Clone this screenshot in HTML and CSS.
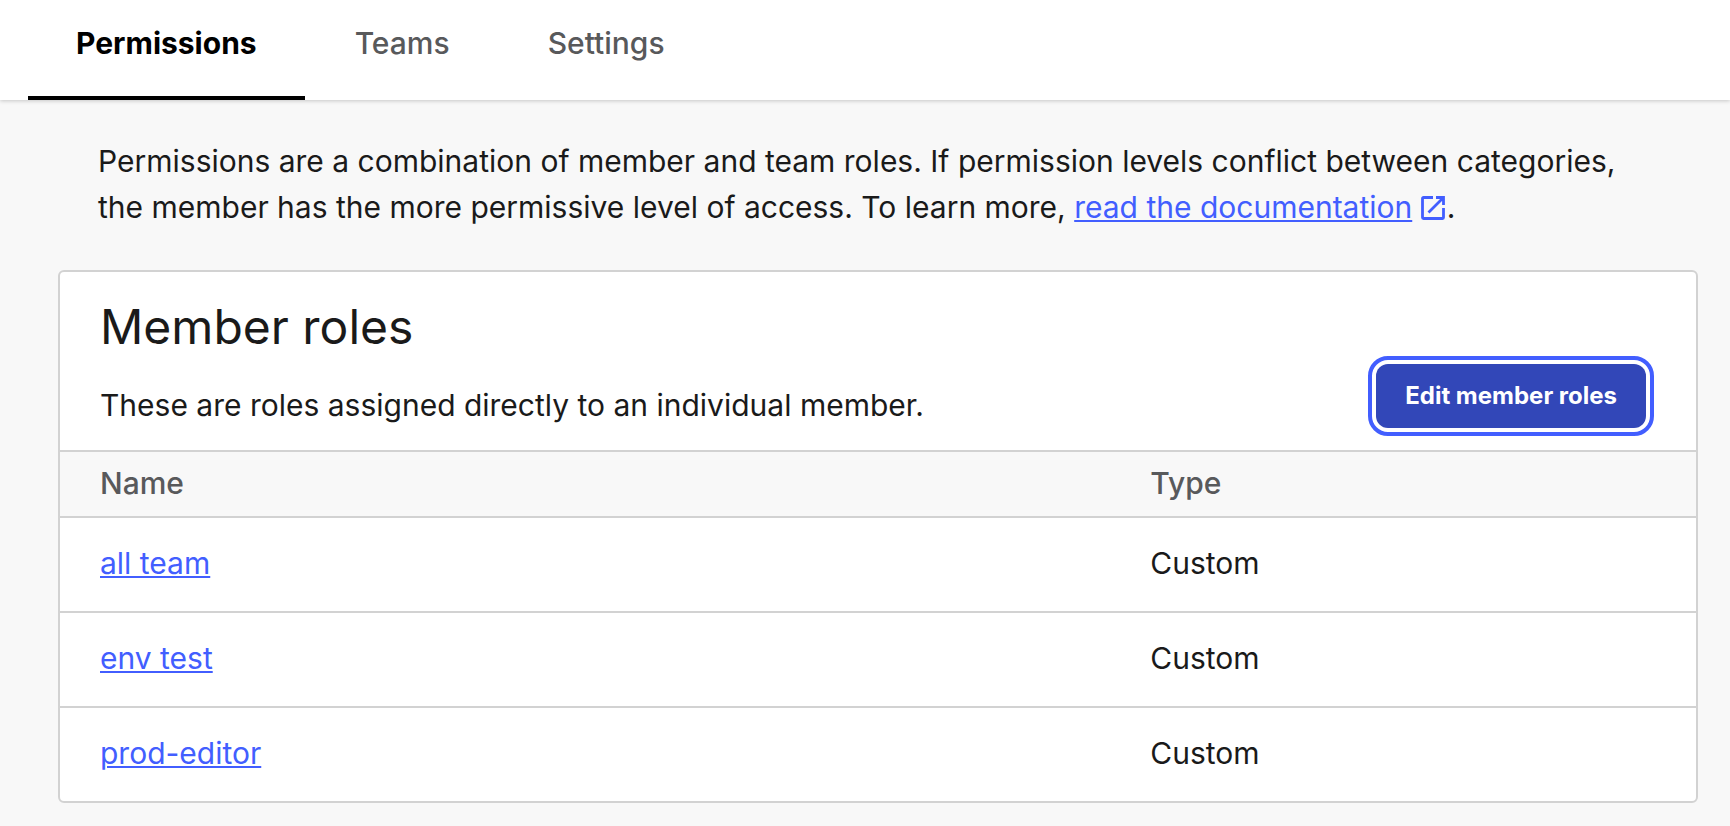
FILE: index.html
```html
<!DOCTYPE html>
<html lang="en">
<head>
<meta charset="utf-8">
<meta name="viewport" content="width=device-width, initial-scale=1">
<title>Permissions</title>
<link rel="stylesheet" href="styles.css">
</head>
<body>
<nav class="tabs" aria-label="Member sections">
  <a class="tab tab-active" href="#permissions" aria-current="page">Permissions</a>
  <a class="tab" href="#teams">Teams</a>
  <a class="tab" href="#settings">Settings</a>
</nav>
<main class="content">
  <p class="intro">Permissions are a combination of member and team roles. If permission levels conflict between categories, the member has the more permissive level of access. To learn more, <a class="link" href="#docs">read the documentation</a> <svg class="external" viewBox="0 0 24 24" aria-hidden="true"><path d="M12 1.500H2.500a1 1 0 0 0-1 1v19a1 1 0 0 0 1 1h19a1 1 0 0 0 1-1V12M15 1.500h7.500V9M22 2L7.500 16.500" fill="none" stroke="currentColor" stroke-width="2.800"/></svg>.</p>
  <section class="card" aria-labelledby="roles-title">
    <header class="card-header">
      <div class="card-text">
        <h2 class="card-title" id="roles-title">Member roles</h2>
        <p class="card-description">These are roles assigned directly to an individual member.</p>
      </div>
      <button class="button" type="button">Edit member roles</button>
    </header>
    <table class="roles">
      <thead>
        <tr><th class="name-column" scope="col">Name</th><th scope="col">Type</th></tr>
      </thead>
      <tbody>
        <tr><td><a class="link" href="#all-team">all team</a></td><td>Custom</td></tr>
        <tr><td><a class="link" href="#env-test">env test</a></td><td>Custom</td></tr>
        <tr><td><a class="link" href="#prod-editor">prod-editor</a></td><td>Custom</td></tr>
      </tbody>
    </table>
  </section>
</main>
</body>
</html>
```
FILE: styles.css
```css
* {
  box-sizing: border-box;
}

body {
  margin: 0;
  background: #f8f8f8;
  color: #1a1a1a;
  font-family: Inter, "Liberation Sans", sans-serif;
  font-size: 30px;
  line-height: 46px;
}

.tabs {
  display: flex;
  gap: 2px;
  padding: 0 28px;
  background: #fff;
  box-shadow: 0 1px 4px rgba(0, 0, 0, 0.2);
}

.tab {
  padding: 20px 48px 30px;
  border-bottom: 4px solid transparent;
  color: #58595b;
  font-weight: 500;
  text-decoration: none;
}

.tab-active {
  border-bottom-color: #000;
  color: #000;
  font-weight: 700;
}

.content {
  padding: 38px 32px 22px 58px;
}

.intro {
  margin: 0 40px 40px;
}

.link {
  color: #425eff;
  text-decoration: underline;
  text-decoration-thickness: 2px;
  text-underline-offset: 2px;
}

.external {
  width: 24px;
  height: 24px;
  margin-right: 2px;
  color: #425eff;
  vertical-align: -2px;
}

.card {
  overflow: hidden;
  border: 2px solid #d2d2d2;
  border-radius: 6px;
  background: #fff;
}

.card-header {
  display: flex;
  align-items: flex-end;
  justify-content: space-between;
  padding: 24px 50px 22px 40px;
}

.card-title {
  margin: 0 0 24px;
  font-size: 48px;
  font-weight: 400;
  line-height: 62px;
}

.card-description {
  margin: 0;
}

.button {
  padding: 0 29px;
  border: 0;
  border-radius: 12px;
  outline: 4px solid #425eff;
  outline-offset: 4px;
  background: #3247b8;
  color: #fff;
  font-family: inherit;
  font-size: 24px;
  font-weight: 700;
  line-height: 64px;
  white-space: nowrap;
}

.roles {
  width: 100%;
  border-collapse: separate;
  border-spacing: 0;
  table-layout: fixed;
}

.roles th,
.roles td {
  padding: 22px 40px 25px;
  border-top: 2px solid #d2d2d2;
  font-weight: 400;
  text-align: left;
}

.roles th {
  padding-top: 8px;
  padding-bottom: 10px;
  background: #f8f8f8;
  color: #58595b;
  font-weight: 500;
}

.name-column {
  width: 64.2%;
}
```
